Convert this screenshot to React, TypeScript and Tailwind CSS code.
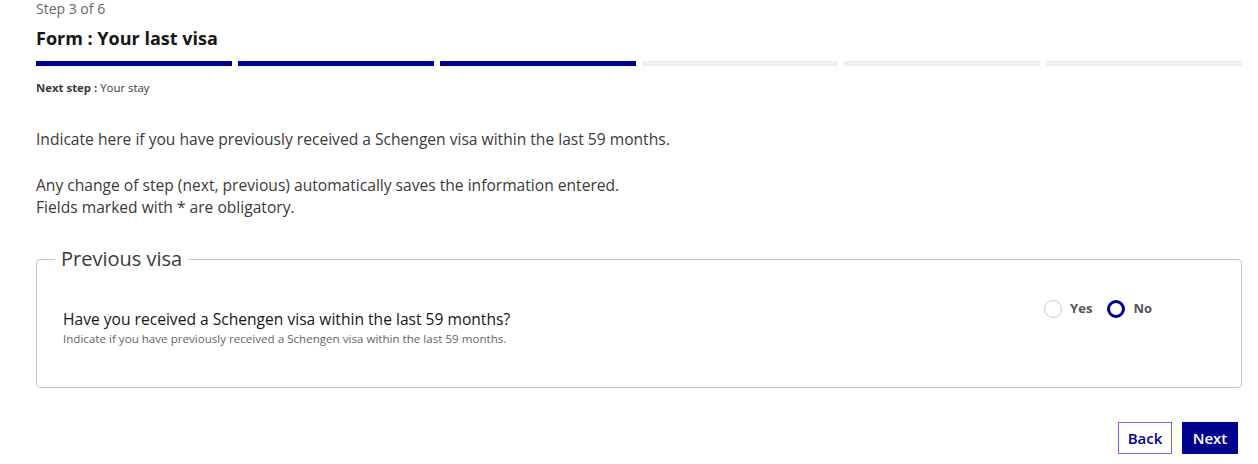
import React from "react";

export default function App() {
  const steps = [true, true, true, false, false, false];
  return (
    <div className="w-[1258px] h-[464px] bg-white overflow-hidden" style={{ fontFamily: "'Open Sans', Lato, sans-serif" }}>
      <div className="pl-[36px] pr-[16px] pt-[0px]">
        <div className="text-[14px] leading-[18px] text-[#666666]">Step 3 of 6</div>
        <h1 className="mt-[9px] text-[18px] leading-[22px] font-bold text-[#161616]">Form : Your last visa</h1>
        <div className="mt-[12px] flex gap-[6px]">
          {steps.map((on, i) => (
            <div key={i} className={on ? "h-[5px] flex-1 bg-[#000091]" : "h-[5px] flex-1 bg-[#eeeeee]"} />
          ))}
        </div>
        <div className="mt-[15px] text-[11.4px] leading-[14px] text-[#3a3a3a]">
          <span className="font-bold">Next step :</span> Your stay
        </div>
        <p className="mt-[33px] text-[15.6px] leading-[22px] text-[#3a3a3a]">
          Indicate here if you have previously received a Schengen visa within the last 59 months.
        </p>
        <p className="mt-[24px] text-[15.6px] leading-[22px] text-[#3a3a3a]">
          Any change of step (next, previous) automatically saves the information entered.
          <br />
          Fields marked with * are obligatory.
        </p>
        <fieldset className="mt-[29px] h-[141px] border border-[#c4c4c4] rounded-[4px] pl-[26px] pr-[16px]">
          <legend className="px-[6px] ml-[-8px] text-[20px] leading-[24px] text-[#3a3a3a]">Previous visa</legend>
          <div className="flex items-start justify-between pt-[28px]">
            <div>
              <div className="mt-[10px] text-[15.6px] leading-[20px] text-[#161616]">
                Have you received a Schengen visa within the last 59 months?
              </div>
              <div className="mt-[3px] text-[11.6px] leading-[14px] text-[#666666]">
                Indicate if you have previously received a Schengen visa within the last 59 months.
              </div>
            </div>
            <div className="flex items-center mr-[73px] gap-[15px]">
              <label className="flex items-center gap-[8px]">
                <span className="w-[18px] h-[18px] rounded-full border border-[#cccccc] bg-white" />
                <span className="text-[13px] font-bold text-[#555555]">Yes</span>
              </label>
              <label className="flex items-center gap-[8px]">
                <span className="w-[18px] h-[18px] rounded-full border-[3px] border-[#000091] bg-white" />
                <span className="text-[13px] font-bold text-[#555555]">No</span>
              </label>
            </div>
          </div>
        </fieldset>
        <div className="mt-[34px] flex justify-end gap-[10px] pr-[4px]">
          <button className="h-[32px] w-[54px] border border-[#6a6af4] text-[#000091] text-[15px] font-semibold bg-white">Back</button>
          <button className="h-[32px] w-[56px] bg-[#000091] text-white text-[15px] font-semibold">Next</button>
        </div>
      </div>
    </div>
  );
}
